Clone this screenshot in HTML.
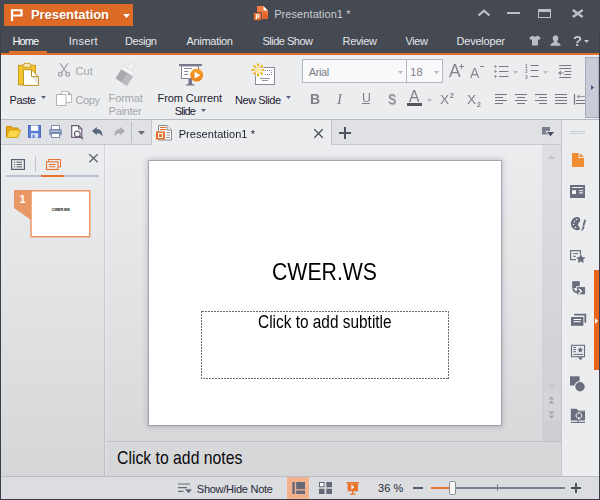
<!DOCTYPE html>
<html>
<head>
<meta charset="utf-8">
<title>Presentation1</title>
<style>
*{box-sizing:border-box;margin:0;padding:0}
html,body{width:600px;height:500px;overflow:hidden;background:#454952}
#app{position:relative;width:600px;height:500px;overflow:hidden;background:#454952;font-family:"Liberation Sans",sans-serif;font-size:11px}
#app div,#app span,#app svg{position:absolute}
#app svg{overflow:visible}
.t{white-space:pre}
</style>
</head>
<body>
<div id="app">
<!-- title bar -->
<div style="left:4px;top:4px;width:129px;height:22px;background:#de6b25;"></div>
<svg style="left:10px;top:8px" width="14" height="14" viewBox="0 0 14 14"><path d="M2 13V2.250h9.500V7.500H2" fill="none" stroke="#fff" stroke-width="2.200"/></svg>
<span class="t" style="left:31.00px;top:7.90px;font-size:13px;line-height:13px;color:#fff;letter-spacing:-0.068px;font-weight:bold;text-shadow:1px 1px 0 rgba(150,70,20,.55);">Presentation</span>
<svg style="left:123px;top:13.5px" width="7" height="4" viewBox="0 0 7 4"><path d="M0 0h7L3.500 4z" fill="#fff"/></svg>
<svg style="left:253px;top:5px" width="16" height="16" viewBox="0 0 16 16"><path d="M4 1h6.500L15 5.500V14H4z" fill="#f47b40"/><path d="M10.500 1.300L14.700 5.500H10.500z" fill="#fff"/><path d="M10 6L15 11V14H10z" fill="#e2642a"/><rect x="0.600" y="7.600" width="7.900" height="7.900" fill="#ee6f33" stroke="#454952" stroke-width="0.800"/><path d="M3.400 14.200V9.800h2.400v2.300H3.400" fill="none" stroke="#fff" stroke-width="1.100"/></svg>
<span class="t" style="left:274.20px;top:9.19px;font-size:11px;line-height:11px;color:#c9ccd3;letter-spacing:0.077px;">Presentation1 *</span>
<svg style="left:476px;top:8px" width="16" height="10" viewBox="0 0 16 10"><path d="M2.500 7.500L8 2.700L13.500 7.500" fill="none" stroke="#bbbec6" stroke-width="2.300"/></svg>
<div style="left:507px;top:12px;width:12.5px;height:2px;background:#bbbec6;"></div>
<svg style="left:538px;top:9px" width="13" height="9" viewBox="0 0 13 9"><rect x="0.500" y="0.500" width="12" height="8" fill="none" stroke="#bbbec6" stroke-width="1"/><rect x="0" y="0" width="13" height="3" fill="#bbbec6"/></svg>
<svg style="left:572px;top:9px" width="11" height="9" viewBox="0 0 11 9"><path d="M0.800 1L10.700 8M10.700 1L0.800 8" fill="none" stroke="#bbbec6" stroke-width="2.400"/></svg>
<!-- menu -->
<span class="t" style="left:12.50px;top:36.19px;font-size:11px;line-height:11px;color:#ffffff;letter-spacing:-0.948px;">Home</span>
<span class="t" style="left:68.70px;top:36.19px;font-size:11px;line-height:11px;color:#e4e6ea;letter-spacing:0.257px;">Insert</span>
<span class="t" style="left:125.00px;top:36.19px;font-size:11px;line-height:11px;color:#e4e6ea;letter-spacing:-0.450px;">Design</span>
<span class="t" style="left:186.50px;top:36.19px;font-size:11px;line-height:11px;color:#e4e6ea;letter-spacing:-0.303px;">Animation</span>
<span class="t" style="left:262.50px;top:36.19px;font-size:11px;line-height:11px;color:#e4e6ea;letter-spacing:-0.505px;">Slide Show</span>
<span class="t" style="left:342.50px;top:36.19px;font-size:11px;line-height:11px;color:#e4e6ea;letter-spacing:-0.316px;">Review</span>
<span class="t" style="left:405.50px;top:36.19px;font-size:11px;line-height:11px;color:#e4e6ea;letter-spacing:-0.385px;">View</span>
<span class="t" style="left:456.50px;top:36.19px;font-size:11px;line-height:11px;color:#e4e6ea;letter-spacing:-0.205px;">Developer</span>
<svg style="left:529px;top:35px" width="12" height="11" viewBox="0 0 12 11"><path d="M3.500 0.500L0.300 2.800L1.600 5L3 4.200V10.500H9V4.200L10.400 5L11.700 2.800L8.500 0.500C8 1.800 4 1.800 3.500 0.500z" fill="#babdc5"/></svg>
<svg style="left:550px;top:35px" width="11" height="11" viewBox="0 0 11 11"><path d="M5.500 0.300C7.300 0.300 8.300 1.700 8.300 3.300C8.300 4.900 7.500 6 6.800 6.500C7 7.600 10.500 8 10.700 10.700H0.300C0.500 8 4 7.600 4.200 6.500C3.500 6 2.700 4.900 2.700 3.300C2.700 1.700 3.700 0.300 5.500 0.300z" fill="#babdc5"/></svg>
<span class="t" style="left:572.50px;top:33.97px;font-size:14.8px;line-height:14.8px;color:#c6c8cf;font-weight:bold;will-change:transform;">?</span>
<svg style="left:584px;top:40px" width="5" height="3" viewBox="0 0 5 3"><path d="M0 0h5L2.500 3z" fill="#c6c8cf"/></svg>
<div style="left:9px;top:51px;width:38px;height:2px;background:#e0702c;"></div>
<div style="left:1px;top:53px;width:598px;height:2px;background:#e0702c;"></div>
<!-- ribbon -->
<div style="left:1px;top:55px;width:598px;height:64px;background:#ecedef;"></div>
<div style="left:1px;top:119px;width:598px;height:1px;background:#b7bac1;"></div>
<svg style="left:18px;top:62px" width="22" height="25" viewBox="0 0 22 25"><rect x="0.500" y="3.300" width="17" height="19.500" fill="#f5c62c" stroke="#c99a1e" stroke-width="1"/><path d="M6 1.400H12V2.700H13.100V5.200H4.900V2.700H6z" fill="#f6e7b4" stroke="#c99a1e" stroke-width="0.900"/><path d="M5.400 7.700H13.500L20.400 14.600V23.400H5.400z" fill="#fff" stroke="#b8901c" stroke-width="1"/><path d="M14.200 15.300H19.800V22.300z" fill="#e4e4e5"/><path d="M13.500 7.700V14.600H20.400" fill="none" stroke="#b8901c" stroke-width="1"/></svg>
<span class="t" style="left:9.50px;top:95.19px;font-size:11px;line-height:11px;color:#1e2030;letter-spacing:-0.410px;">Paste</span>
<svg style="left:41px;top:96px" width="5.5" height="3.2" viewBox="0 0 5.5 3.2"><path d="M0 0h5L2.500 3z" fill="#5d627c"/></svg>
<svg style="left:57px;top:62px" width="14" height="15" viewBox="0 0 14 15"><path d="M3 1L9.800 11.200M11 1L4.200 11.200" fill="none" stroke="#a2a4a8" stroke-width="1.200"/><circle cx="3.300" cy="12.300" r="1.900" fill="none" stroke="#a2a4a8" stroke-width="1.200"/><circle cx="10.700" cy="12.300" r="1.900" fill="none" stroke="#a2a4a8" stroke-width="1.200"/></svg>
<span class="t" style="left:75.50px;top:66.19px;font-size:11px;line-height:11px;color:#a4a6ac;letter-spacing:0.038px;">Cut</span>
<svg style="left:56px;top:91px" width="16" height="15" viewBox="0 0 16 15"><path d="M5.500 0.500H12L15.500 4V11.500H5.500z" fill="#fff" stroke="#b9babd" stroke-width="1"/><path d="M12 0.500V4H15.500z" fill="#b4b5b8" stroke="#b4b5b8" stroke-width="0.600"/><path d="M0.500 3.500H10V14.500H0.500z" fill="#fff" stroke="#b0b1b5" stroke-width="1"/></svg>
<span class="t" style="left:75.50px;top:95.19px;font-size:11px;line-height:11px;color:#a4a6ac;letter-spacing:-0.396px;">Copy</span>
<svg style="left:115px;top:62px" width="22" height="25" viewBox="0 0 22 25"><g transform="rotate(32 11 12)"><rect x="9" y="-1" width="4.500" height="8" rx="1.500" fill="#f4f4f5" stroke="#cfd0d3" stroke-width=".600"/><rect x="4.500" y="6.500" width="13.500" height="4" fill="#f7f7f8" stroke="#cfd0d3" stroke-width=".600"/><rect x="4.500" y="10.500" width="13.500" height="11" fill="#a9aaad"/><rect x="11.500" y="10.500" width="6.500" height="11" fill="#b9babd"/></g></svg>
<span class="t" style="left:108.60px;top:93.19px;font-size:11px;line-height:11px;color:#a4a6ac;letter-spacing:-0.129px;">Format</span>
<span class="t" style="left:108.60px;top:106.19px;font-size:11px;line-height:11px;color:#a4a6ac;letter-spacing:-0.293px;">Painter</span>
<svg style="left:178px;top:63px" width="26" height="24" viewBox="0 0 26 24"><defs><linearGradient id="og" x1="0" y1="0" x2="0" y2="1"><stop offset="0" stop-color="#f6a233"/><stop offset="1" stop-color="#ea8016"/></linearGradient></defs><rect x="1" y="1" width="23" height="2" fill="#77768c"/><rect x="3.500" y="3" width="17" height="12.500" fill="#fff" stroke="#858498" stroke-width="1"/><path d="M6.200 5.500h7.800M6.200 8.500h4M6.200 11.500h4" stroke="#858498" stroke-width="1"/><path d="M10.500 16h3.500v4.500l3.500 2h-10.500l3.500-2z" fill="#77768c"/><circle cx="18.700" cy="12.100" r="6.500" fill="url(#og)"/><path d="M16.700 8.800L22.300 12.200L16.700 15.600z" fill="#fff"/></svg>
<span class="t" style="left:157.60px;top:93.19px;font-size:11px;line-height:11px;color:#1e2030;letter-spacing:-0.091px;">From Current</span>
<span class="t" style="left:174.70px;top:106.19px;font-size:11px;line-height:11px;color:#1e2030;letter-spacing:-0.792px;">Slide</span>
<svg style="left:201px;top:109.3px" width="5.5" height="3.2" viewBox="0 0 5.5 3.2"><path d="M0 0h5L2.500 3z" fill="#5d627c"/></svg>
<svg style="left:251px;top:62px" width="26" height="24" viewBox="0 0 26 24"><rect x="4.500" y="5.500" width="19" height="17" fill="#fff" stroke="#8a889c" stroke-width="1"/><path d="M14 8.500h8M14 12.500h8M20 10.500h2" stroke="#8a889c" stroke-width="1" stroke-dasharray="1 1"/><path d="M9 16.500h10M11 18.500h6" stroke="#9594a6" stroke-width="1"/><circle cx="7" cy="7.900" r="6.800" fill="#ecedef" opacity=".55"/><path d="M10.70 7.90L13.30 7.90M9.62 10.52L11.45 12.35M7.00 11.60L7.00 14.20M4.38 10.52L2.55 12.35M3.30 7.90L0.70 7.90M4.38 5.28L2.55 3.45M7.00 4.20L7.00 1.60M9.62 5.28L11.45 3.45" stroke="#f4b719" stroke-width="2" fill="none"/><circle cx="7" cy="7.900" r="2.900" fill="#fde7a2"/></svg>
<span class="t" style="left:235.00px;top:95.19px;font-size:11px;line-height:11px;color:#1e2030;letter-spacing:-0.441px;">New Slide</span>
<svg style="left:286px;top:96px" width="5.5" height="3.2" viewBox="0 0 5.5 3.2"><path d="M0 0h5L2.500 3z" fill="#5d627c"/></svg>
<div style="left:302px;top:59px;width:105px;height:24px;background:#f9f9fb;border:1px solid #b3b6c4;"></div>
<div style="left:406px;top:59px;width:37px;height:24px;background:#f9f9fb;border:1px solid #b3b6c4;"></div>
<span class="t" style="left:308.70px;top:67.19px;font-size:11px;line-height:11px;color:#7d7e86;letter-spacing:-0.354px;">Arial</span>
<span class="t" style="left:410.30px;top:67.19px;font-size:11px;line-height:11px;color:#7d7e86;">18</span>
<svg style="left:398px;top:71px" width="5" height="3" viewBox="0 0 5 3"><path d="M0 0h5L2.500 3z" fill="#b9babf"/></svg>
<svg style="left:434px;top:71px" width="5" height="3" viewBox="0 0 5 3"><path d="M0 0h5L2.500 3z" fill="#b9babf"/></svg>
<span class="t" style="left:310.30px;top:92.25px;font-size:14px;line-height:14px;color:#7f8084;font-weight:bold;will-change:transform;">B</span>
<span class="t" style="left:336.60px;top:92.40px;font-size:15px;line-height:15px;color:#7f8084;font-style:italic;font-family:'Liberation Serif',serif;will-change:transform;">I</span>
<span class="t" style="left:361.50px;top:92.09px;font-size:12.3px;line-height:12.3px;color:#7f8084;will-change:transform;">U</span>
<div style="left:361.5px;top:103px;width:8.5px;height:1px;background:#7f8084;"></div>
<span class="t" style="left:388.00px;top:91.83px;font-size:14.5px;line-height:14.5px;color:#808186;text-shadow:1px 1px 1px rgba(0,0,0,.3);transform:scaleX(.82);transform-origin:0 0;">S</span>
<span class="t" style="left:408.60px;top:88.99px;font-size:15.6px;line-height:15.6px;color:#7f8084;will-change:transform;">A</span>
<div style="left:407px;top:103px;width:15px;height:3px;background:#55565b;"></div>
<svg style="left:427px;top:98.5px" width="5" height="3" viewBox="0 0 5 3"><path d="M0 0h5L2.500 3z" fill="#b9babf"/></svg>
<span class="t" style="left:440.20px;top:92.79px;font-size:13.6px;line-height:13.6px;color:#7f8084;will-change:transform;">X</span>
<span class="t" style="left:449.80px;top:91.77px;font-size:7px;line-height:7px;color:#7f8084;font-weight:bold;will-change:transform;">2</span>
<span class="t" style="left:466.50px;top:92.79px;font-size:13.6px;line-height:13.6px;color:#7f8084;will-change:transform;">X</span>
<span class="t" style="left:476.80px;top:100.97px;font-size:7px;line-height:7px;color:#7f8084;font-weight:bold;will-change:transform;">2</span>
<span class="t" style="left:448.80px;top:63.09px;font-size:17.5px;line-height:17.5px;color:#85868a;will-change:transform;">A</span>
<svg style="left:459px;top:64px" width="5" height="5" viewBox="0 0 5 5"><path d="M2.500 0V5M0 2.500H5" stroke="#8a8b8f" stroke-width="1"/></svg>
<span class="t" style="left:470.00px;top:66.05px;font-size:14px;line-height:14px;color:#85868a;will-change:transform;">A</span>
<div style="left:479.5px;top:66px;width:4.5px;height:1px;background:#8a8b8f;"></div>
<svg style="left:493px;top:64px" width="16" height="15" viewBox="0 0 16 15"><path d="M6 2.500h9.500M6 7.500h9.500M6 12.500h9.500" stroke="#77787d" stroke-width="1.200"/><path d="M1 2.500h3M2.500 1v3M1 7.500h3M2.500 6v3M1 12.500h3M2.500 11v3" stroke="#9c9da1" stroke-width="1"/></svg>
<svg style="left:513px;top:70.5px" width="5" height="3" viewBox="0 0 5 3"><path d="M0 0h5L2.500 3z" fill="#b9babf"/></svg>
<svg style="left:524px;top:62px" width="16" height="17" viewBox="0 0 16 17"><path d="M6.500 3.500h8M6.500 8.500h8M6.500 14.500h8" stroke="#77787d" stroke-width="1.200"/></svg>
<span class="t" style="left:525.00px;top:63.57px;font-size:5px;line-height:5px;color:#85868b;font-weight:bold;will-change:transform;">1</span>
<span class="t" style="left:525.00px;top:68.97px;font-size:5px;line-height:5px;color:#85868b;font-weight:bold;will-change:transform;">2</span>
<span class="t" style="left:525.00px;top:74.57px;font-size:5px;line-height:5px;color:#85868b;font-weight:bold;will-change:transform;">3</span>
<svg style="left:543px;top:70.5px" width="5" height="3" viewBox="0 0 5 3"><path d="M0 0h5L2.500 3z" fill="#b9babf"/></svg>
<svg style="left:557px;top:63px" width="16" height="16" viewBox="0 0 16 16"><path d="M2.200 2.500h12M2.200 5.500h12M7.600 8.500h6.600M7.600 11.500h6.600M2.200 14.500h12" stroke="#77787d" stroke-width="1.200"/><path d="M1 10L4 7.400V9.500H6.800V10.500H4V12.600z" fill="#8c8d92"/></svg>
<svg style="left:495px;top:93px" width="13" height="12" viewBox="0 0 13 12"><path d="M0 1.500h12M0 4.500h8M0 7.500h12M0 10.500h8" stroke="#77787d" stroke-width="1.200"/></svg>
<svg style="left:515px;top:93px" width="13" height="12" viewBox="0 0 13 12"><path d="M0 1.500h12M2 4.500h8M0 7.500h12M2 10.500h8" stroke="#77787d" stroke-width="1.200"/></svg>
<svg style="left:535px;top:93px" width="13" height="12" viewBox="0 0 13 12"><path d="M0 1.500h12M4 4.500h8M0 7.500h12M4 10.500h8" stroke="#77787d" stroke-width="1.200"/></svg>
<svg style="left:555px;top:93px" width="13" height="12" viewBox="0 0 13 12"><path d="M0 1.500h12M0 4.500h12M0 7.500h12M0 10.500h12" stroke="#77787d" stroke-width="1.200"/></svg>
<svg style="left:573px;top:93px" width="13" height="12" viewBox="0 0 13 12"><path d="M1.500 1V11.700" stroke="#77787d" stroke-width="1.200"/><path d="M3 7.500h10M3 10.500h10" stroke="#77787d" stroke-width="1.200"/><path d="M3.500 3.500L6.500 1.300V3H12V4H6.500V5.700z" fill="#9a9ba0"/></svg>
<div style="left:585px;top:57px;width:14px;height:61px;background:#c9ccd6;border:1px solid #a8acba;"></div>
<svg style="left:591px;top:85px" width="3" height="5" viewBox="0 0 3 5"><path d="M0 0L3 2.500L0 5z" fill="#48548a"/></svg>
<!-- quick access + doc tabs -->
<div style="left:1px;top:120px;width:560px;height:24px;background:#e0e1e5;"></div>
<div style="left:1px;top:144px;width:560px;height:1px;background:#c6c8ce;"></div>
<div style="left:152px;top:120px;width:179px;height:25px;background:#ecedef;"></div>
<div style="left:151px;top:120px;width:1px;height:25px;background:#c3c5cb;"></div>
<div style="left:331px;top:120px;width:1px;height:24px;background:#c3c5cb;"></div>
<svg style="left:6px;top:125px" width="15" height="14" viewBox="0 0 15 14"><path d="M0.500 12.500V1.500H5.500L7 3H12V5" fill="#e8a915" stroke="#c88d0a" stroke-width="1"/><path d="M0.500 12.500L3.300 5H14.500L11.700 12.500z" fill="#fbd648" stroke="#d9a514" stroke-width="1"/></svg>
<svg style="left:28px;top:125px" width="13" height="13" viewBox="0 0 13 13"><rect x="0.500" y="0.500" width="12" height="12" fill="#5c7cd2" stroke="#4a69be" stroke-width="1"/><rect x="3" y="0.500" width="7.200" height="5.300" fill="#fff"/><rect x="3" y="8.300" width="7.200" height="4.500" fill="#dfe6f7"/><rect x="4.700" y="9.800" width="1.800" height="3" fill="#4a69be"/></svg>
<svg style="left:49px;top:125px" width="13" height="13" viewBox="0 0 13 13"><rect x="2.500" y="0.500" width="8" height="4" fill="#fff" stroke="#7f8cab" stroke-width="1"/><rect x="0.300" y="4" width="12.400" height="6.300" rx="1" fill="#7688b0"/><rect x="1.500" y="5.600" width="10" height="1" fill="#d4daea"/><rect x="2.500" y="8.500" width="8" height="4" fill="#fff" stroke="#7f8cab" stroke-width="1"/></svg>
<svg style="left:71px;top:125px" width="13" height="15" viewBox="0 0 13 15"><path d="M0.700 0.700H7.500L10.800 4V12.300H0.700z" fill="#fff" stroke="#6b6078" stroke-width="1.200"/><path d="M7.500 0.700V4H10.800" fill="none" stroke="#6b6078" stroke-width="1"/><circle cx="6.300" cy="9" r="2.900" fill="#f2f2f4" stroke="#6b6078" stroke-width="1.200"/><path d="M8.500 11.200L12 14" stroke="#6b6078" stroke-width="1.600"/></svg>
<svg style="left:92px;top:127px" width="11" height="10" viewBox="0 0 11 10"><path d="M0 4L4.800 0V2C8.800 2 10.700 5 10.400 9.800C9.300 7.200 7.800 6.200 4.800 6.200V8.200z" fill="#56667f"/></svg>
<svg style="left:114px;top:127px" width="11" height="10" viewBox="0 0 11 10"><path d="M11 4L6.200 0V2C2.200 2 0.300 5 0.600 9.800C1.700 7.200 3.200 6.200 6.200 6.200V8.200z" fill="#a9abb1"/></svg>
<div style="left:131px;top:122px;width:1px;height:21px;background:#bcbec5;"></div>
<svg style="left:138px;top:130.5px" width="7" height="4" viewBox="0 0 7 4"><path d="M0 0h7L3.500 4z" fill="#6b6c72"/></svg>
<svg style="left:156px;top:125px" width="17" height="16" viewBox="0 0 17 16"><path d="M2.500 0.500H11L15.500 5V15H2.500z" fill="#fff" stroke="#8a8b90" stroke-width="1"/><path d="M11 0.500V5H15.500" fill="#f1f1f2" stroke="#8a8b90" stroke-width="1"/><path d="M4 2.500h6M4 4.700h6" stroke="#e8702c" stroke-width="1.200"/><rect x="0" y="6.500" width="9" height="8" fill="#e8702c"/><rect x="2.500" y="8.500" width="4" height="4" fill="none" stroke="#fff" stroke-width="1"/><path d="M10.500 7.500h3.500M10.500 10h3.500M10.500 12.500h3.500" stroke="#8a8b90" stroke-width="1"/></svg>
<span class="t" style="left:178.70px;top:129.19px;font-size:11px;line-height:11px;color:#1e2030;letter-spacing:0.077px;">Presentation1 *</span>
<svg style="left:314px;top:129px" width="9" height="9" viewBox="0 0 9 9"><path d="M0.300 0.300L8.700 8.700M8.700 0.300L0.300 8.700" stroke="#4c505c" stroke-width="1.300"/></svg>
<svg style="left:339px;top:127px" width="12" height="12" viewBox="0 0 12 12"><path d="M6 0V12M0 6H12" stroke="#4c505c" stroke-width="2"/></svg>
<svg style="left:542px;top:127px" width="13" height="10" viewBox="0 0 13 10"><rect x="0" y="0" width="8" height="7.500" fill="#7c7f8e"/><path d="M4 4.500H13L8.500 10z" fill="#4d5062" stroke="#e0e1e5" stroke-width="1"/></svg>
<!-- left panel -->
<div style="left:1px;top:145px;width:560px;height:331px;background:linear-gradient(#ecedef,#e1e2e4 50%,#d5d6d8);"></div>
<div style="left:104px;top:145px;width:1px;height:331px;background:rgba(110,112,125,.20);"></div>
<div style="left:105px;top:145px;width:1.5px;height:331px;background:rgba(255,255,255,.16);"></div>
<svg style="left:11px;top:159px" width="14" height="11" viewBox="0 0 14 11"><rect x="0.600" y="0.600" width="12.800" height="9.800" fill="none" stroke="#5a5d6c" stroke-width="1.200"/><path d="M3 3.200h1.200M5.500 3.200h5.500M3 5.500h1.200M5.500 5.500h5.500M3 7.800h1.200M5.500 7.800h5.500" stroke="#5a5d6c" stroke-width="1"/></svg>
<div style="left:35px;top:156px;width:1px;height:16px;background:#c3c5cb;"></div>
<svg style="left:46px;top:159px" width="15" height="11" viewBox="0 0 15 11"><path d="M2.500 2.500V0.500H14.500V8H12.500" fill="none" stroke="#e8722e" stroke-width="1"/><rect x="0.500" y="2.800" width="11.500" height="7.700" fill="none" stroke="#e8722e" stroke-width="1.100"/><path d="M3 5.500h6.500M3 7.700h6.500" stroke="#e8722e" stroke-width="1"/></svg>
<svg style="left:89px;top:154px" width="9" height="9" viewBox="0 0 9 9"><path d="M0.300 0.300L8.700 8.300M8.700 0.300L0.300 8.300" stroke="#5a5d6c" stroke-width="1.200"/></svg>
<div style="left:6px;top:175px;width:93px;height:2px;background:#bbbfce;"></div>
<div style="left:41px;top:175px;width:23px;height:2px;background:#e8722e;"></div>
<svg style="left:14px;top:190px" width="77" height="48" viewBox="0 0 77 48"><path d="M0 0H17V30L0 18z" fill="#e99765"/><rect x="17" y="0.750" width="58.700" height="46" fill="#fff" stroke="#ea9662" stroke-width="1.500"/></svg>
<span class="t" style="left:19.50px;top:194.19px;font-size:11px;line-height:11px;color:#fff;font-weight:bold;">1</span>
<span class="t" style="left:51.60px;top:207.71px;font-size:4px;line-height:4px;color:#222;letter-spacing:-0.230px;font-weight:bold;">CWER.WS</span>
<!-- editor -->
<div style="left:542px;top:145px;width:19px;height:296px;background:rgba(140,142,160,.14);"></div>
<div style="left:544px;top:393px;width:16px;height:28px;background:rgba(255,255,255,.10);"></div>
<svg style="left:548px;top:155px" width="7" height="4" viewBox="0 0 7 4"><path d="M3.500 0L7 4H0z" fill="#c4c5c8"/></svg>
<svg style="left:548px;top:384px" width="7" height="4" viewBox="0 0 7 4"><path d="M0 0H7L3.500 4z" fill="#c6c6c4"/></svg>
<svg style="left:548px;top:396px" width="7" height="8" viewBox="0 0 7 8"><path d="M3.500 0.300L6.500 3.500H0.500zM3.500 4.300L6.500 7.500H0.500z" fill="#a6a7ab"/></svg>
<svg style="left:548px;top:411px" width="7" height="8" viewBox="0 0 7 8"><path d="M0.500 0.500H6.500L3.500 3.700zM0.500 4.500H6.500L3.500 7.700z" fill="#a6a7ab"/></svg>
<div style="left:149px;top:161px;width:352px;height:264px;background:#fff;box-shadow:0 0 0 1px rgba(120,124,140,.48),0 0 5px 2px rgba(90,92,105,.28);"></div>
<span class="t" style="left:271.80px;top:260.52px;font-size:23.6px;line-height:23.6px;color:#000;transform:scaleX(0.9001);transform-origin:0 0;">CWER.WS</span>
<svg style="left:201px;top:311px" width="248" height="68" viewBox="0 0 248 68"><rect x="0.500" y="0.500" width="247" height="67" fill="none" stroke="#6c6c6c" stroke-width="1" stroke-dasharray="2 1" shape-rendering="crispEdges"/></svg>
<span class="t" style="left:257.60px;top:314.23px;font-size:17.8px;line-height:17.8px;color:#000;transform:scaleX(0.8665);transform-origin:0 0;">Click to add subtitle</span>
<div style="left:107px;top:441px;width:454px;height:1px;background:#bfc0c7;"></div>
<span class="t" style="left:117.40px;top:450.23px;font-size:17.8px;line-height:17.8px;color:#0a0a0a;transform:scaleX(0.8872);transform-origin:0 0;">Click to add notes</span>
<!-- sidebar -->
<div style="left:561px;top:120px;width:38px;height:356px;background:#ecedef;"></div>
<div style="left:561px;top:120px;width:1px;height:356px;background:#c6c8ce;"></div>
<div style="left:570px;top:131px;width:15px;height:1px;background:#cbcdd5;"></div>
<div style="left:570px;top:133px;width:15px;height:1px;background:#cbcdd5;"></div>
<svg style="left:572px;top:153px" width="12" height="14" viewBox="0 0 12 14"><path d="M0 0H6.600V5H12V14H0z" fill="#f08c32"/><path d="M7.700 0L12 4.100H7.700z" fill="#f08c32"/></svg>
<svg style="left:570px;top:185px" width="15" height="13" viewBox="0 0 15 13"><rect x="0" y="0" width="15" height="13" fill="#6a6d7d"/><path d="M2 2.500h11.200" stroke="#fff" stroke-width="0.900"/><rect x="2.200" y="5.200" width="3.700" height="3.800" fill="#fff"/><path d="M9 5.700h4.200M9 7.900h4.200" stroke="#fff" stroke-width="1"/></svg>
<svg style="left:570px;top:217px" width="16" height="15" viewBox="0 0 16 15"><path d="M6.500 0C9-0.300 10.600 1.200 10.300 3.300C10 5.200 8 5.800 8 7.800C8 9.500 10.300 10.300 10 11.800C9.700 13.200 7.500 13.400 5.800 13C2.800 12.300 0.900 9.800 0.900 6.800C0.900 3.200 3.500 0.300 6.500 0z" fill="#6a6d7d"/><circle cx="6.500" cy="2.500" r="0.700" fill="#fff"/><circle cx="4.500" cy="4.500" r="0.700" fill="#fff"/><circle cx="3.500" cy="7.500" r="0.700" fill="#fff"/><circle cx="5.500" cy="10.500" r="0.800" fill="#fff"/><path d="M14.900 3.400L13.700 8" stroke="#6a6d7d" stroke-width="1.900" stroke-linecap="round"/><path d="M12.500 9.100L14.600 9.700C14.300 11.800 12.800 13.500 10.800 14.200C11.800 12.800 12.300 11 12.500 9.100z" fill="#6a6d7d"/></svg>
<svg style="left:570px;top:250px" width="16" height="13" viewBox="0 0 16 13"><path d="M10.400 4.500V0.600H0.600V9.600H6" fill="none" stroke="#6a6d7d" stroke-width="1.200"/><path d="M3 3.600h5M3 6.300h3" stroke="#6a6d7d" stroke-width="1"/><path d="M10.80 4.10L12.27 6.98L15.46 7.49L13.18 9.77L13.68 12.96L10.80 11.50L7.92 12.96L8.42 9.77L6.14 7.49L9.33 6.98z" fill="#6a6d7d" stroke="#ecedef" stroke-width="1" paint-order="stroke"/></svg>
<svg style="left:571px;top:281px" width="15" height="15" viewBox="0 0 15 15"><rect x="1.200" y="0.200" width="7.600" height="6.800" fill="#6a6d7d"/><rect x="5.600" y="5.600" width="8.800" height="8.200" fill="#6a6d7d" stroke="#ecedef" stroke-width="0.900"/><path d="M2.200 7.300C2.300 9.800 3.800 11.200 6.200 11.300" fill="none" stroke="#6a6d7d" stroke-width="1.900"/><path d="M7.600 7.800L10.500 10.300L7.600 12.800" fill="none" stroke="#fff" stroke-width="1.200"/></svg>
<svg style="left:570px;top:313px" width="17" height="13" viewBox="0 0 17 13"><path d="M4.200 1.700H15.300V9.800" fill="none" stroke="#6a6d7d" stroke-width="1.800"/><rect x="1" y="4" width="12.400" height="8.800" fill="#6a6d7d"/><path d="M3.600 6.500h7.400M3.600 8.700h7" stroke="#fff" stroke-width="1"/></svg>
<svg style="left:570px;top:345px" width="16" height="16" viewBox="0 0 16 16"><rect x="1.500" y="0.300" width="13" height="11.400" fill="none" stroke="#6a6d7d" stroke-width="1.100"/><path d="M3.200 2.500h2.800M3.200 4.600h2.800M3.200 6.700h2.800M3.200 9.400h10" stroke="#6a6d7d" stroke-width="1"/><path d="M10.30 1.80L11.18 3.69L13.25 3.94L11.73 5.36L12.12 7.41L10.30 6.40L8.48 7.41L8.87 5.36L7.35 3.94L9.42 3.69z" fill="#6a6d7d"/><path d="M8 12.200h5L10.500 15.200z" fill="#6a6d7d"/></svg>
<svg style="left:570px;top:376px" width="16" height="16" viewBox="0 0 16 16"><rect x="0" y="0.300" width="9.600" height="9.200" fill="#6a6d7d"/><circle cx="10" cy="10.800" r="5.300" fill="#6a6d7d" stroke="#ecedef" stroke-width="1.200"/></svg>
<svg style="left:570px;top:408px" width="16" height="16" viewBox="0 0 16 16"><path d="M0.800 0.800H6.500L8 2.300H15V12.400H0.800z" fill="#6a6d7d"/><path d="M8.300 2.900H14.300" stroke="#ecedef" stroke-width="0.800"/><path d="M0.800 14.400H15" stroke="#6a6d7d" stroke-width="1.100"/><path d="M8 12.400V14.400" stroke="#6a6d7d" stroke-width="1.300"/><path d="M10.400 10.200A2.900 2.900 0 1 0 7.300 10.100" fill="none" stroke="#fff" stroke-width="1"/><path d="M8.100 8.800L10.600 10.300L8.100 11.700z" fill="#fff"/></svg>
<div style="left:594px;top:270px;width:5px;height:100px;background:#e8641a;"></div>
<svg style="left:595px;top:317.5px" width="3" height="6" viewBox="0 0 3 6"><path d="M0 0L3 3L0 6z" fill="#fff"/></svg>
<!-- status bar -->
<div style="left:1px;top:476px;width:598px;height:23px;background:#dcdde0;"></div>
<div style="left:1px;top:476px;width:598px;height:1px;background:#bcbdc3;"></div>
<svg style="left:178px;top:483px" width="15" height="11" viewBox="0 0 15 11"><path d="M0 1h12M0 4.700h9M0 8.400h5.500" stroke="#646878" stroke-width="1.200"/><path d="M7 6.300H14L10.500 10.300z" fill="#646878"/></svg>
<span class="t" style="left:196.80px;top:484.19px;font-size:11px;line-height:11px;color:#25283a;letter-spacing:-0.254px;">Show/Hide Note</span>
<div style="left:287px;top:477px;width:22px;height:22px;background:#f3b28e;"></div>
<svg style="left:292px;top:482px" width="14" height="12" viewBox="0 0 14 12"><rect x="0.300" y="0" width="2.400" height="12" fill="#646878"/><rect x="4.200" y="0" width="8.800" height="7.200" fill="#646878"/><rect x="4.200" y="8.500" width="8.800" height="3.500" fill="#646878"/></svg>
<svg style="left:319px;top:482px" width="14" height="12" viewBox="0 0 14 12"><rect x="0.500" y="0.500" width="4.500" height="4.300" fill="#fff" stroke="#646878" stroke-width="1"/><rect x="7.300" y="0" width="5.700" height="5.300" fill="#646878"/><rect x="0" y="6.700" width="5.500" height="5.300" fill="#646878"/><rect x="7.300" y="6.700" width="5.700" height="5.300" fill="#646878"/></svg>
<svg style="left:346px;top:481px" width="14" height="14" viewBox="0 0 14 14"><rect x="0.600" y="1" width="12.400" height="1.600" fill="#e8742c"/><rect x="1.600" y="2.500" width="10.400" height="7.700" fill="#e8742c"/><rect x="6.100" y="10" width="1.400" height="3" fill="#e8742c"/><rect x="4" y="12.600" width="5.600" height="1.200" fill="#e8742c"/><path d="M5.400 3.400L8.200 6.100L5.400 8.800z" fill="#fff"/></svg>
<span class="t" style="left:378.00px;top:483.19px;font-size:11px;line-height:11px;color:#25283a;letter-spacing:0.107px;">36 %</span>
<div style="left:413px;top:487px;width:10px;height:2px;background:#565a6c;"></div>
<div style="left:431px;top:487px;width:19px;height:2px;background:#e8742c;"></div>
<div style="left:456px;top:487px;width:109px;height:2px;background:#7b7f8f;"></div>
<div style="left:497px;top:484px;width:1px;height:7px;background:#7b7f8f;"></div>
<div style="left:449px;top:481px;width:7px;height:14px;background:#f6f6f6;border:1px solid #8b8c90;border-radius:1.500px;"></div>
<svg style="left:571px;top:483px" width="10" height="10" viewBox="0 0 10 10"><path d="M5 0V10M0 5H10" stroke="#4a4e5e" stroke-width="2"/></svg>
<div style="left:0px;top:30px;width:1px;height:470px;background:#3b3f4b;"></div>
<div style="left:1px;top:55px;width:1px;height:64px;background:#f2f3f5;"></div>
<div style="left:599px;top:30px;width:1px;height:470px;background:#3b3f4b;"></div>
<div style="left:0px;top:499px;width:600px;height:1px;background:#3b3f4b;"></div>
</div>
</body>
</html>
